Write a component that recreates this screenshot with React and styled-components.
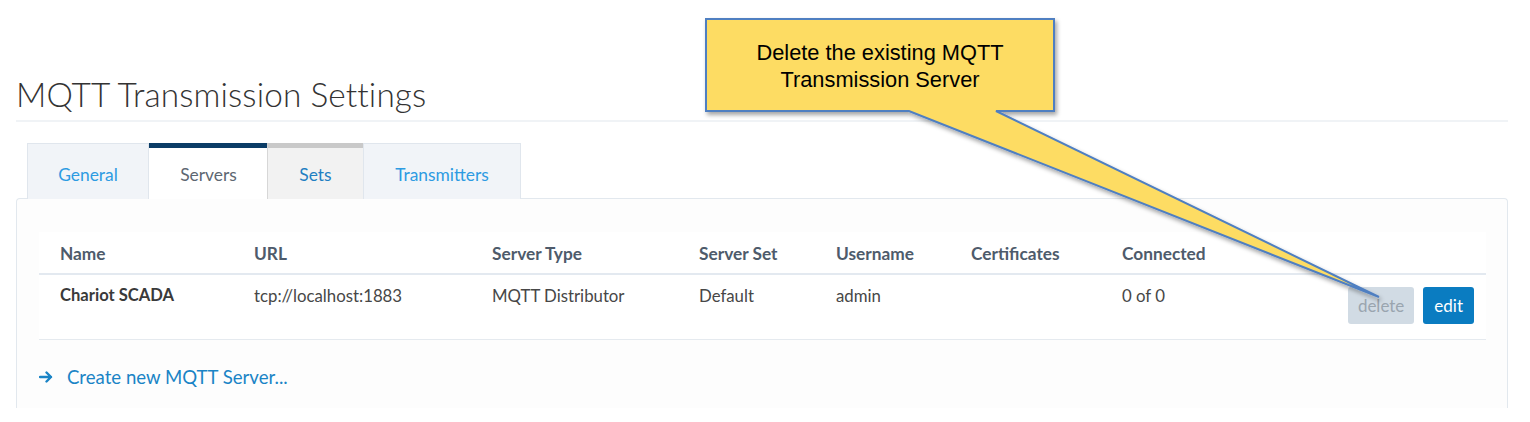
import React from "react";
import styled, { createGlobalStyle } from "styled-components";

const Global = createGlobalStyle`
  html, body { margin: 0; padding: 0; background: #ffffff; }
  body { font-family: Lato, "Noto Sans", sans-serif; color: #444; }
`;

const Page = styled.div`
  position: relative;
  width: 1530px;
  height: 422px;
  padding: 0 22px 0 16px;
  box-sizing: border-box;
  overflow: hidden;
`;

const Header = styled.div`
  padding-top: 72px;
  border-bottom: 2px solid #f0f3f6;
  height: 48px;
  box-sizing: content-box;
`;

const Title = styled.h1`
  margin: 0;
  font-family: Lato, sans-serif;
  font-weight: 300;
  font-size: 33.4px;
  line-height: 44px;
  color: #333;
  letter-spacing: 0.1px;
`;

const Tabs = styled.div`
  display: flex;
  margin-top: 21px;
  padding-left: 11px;
  position: relative;
  z-index: 1;
  margin-bottom: -1px;
`;

const Tab = styled.div`
  box-sizing: border-box;
  width: ${(p) => p.$w}px;
  height: 56px;
  display: flex;
  align-items: center;
  justify-content: center;
  padding-top: 6px;
  font-size: 17.4px;
  border: 1px solid #e0e6ed;
  border-bottom: none;
  margin-right: -1px;
  background: ${(p) =>
    p.$variant === "active" ? "#ffffff" : p.$variant === "muted" ? "#f2f2f2" : "#f1f4f8"};
  color: ${(p) =>
    p.$variant === "active" ? "#5d6772" : p.$variant === "muted" ? "#1f7fc2" : "#2d9be2"};
  border-top: ${(p) =>
    p.$variant === "active"
      ? "5px solid #0b3c66"
      : p.$variant === "muted"
      ? "5px solid #c9c9c9"
      : "1px solid #e0e6ed"};
  ${(p) => (p.$variant === "active" || p.$variant === "muted") && "padding-top: 2px;"}
  ${(p) => p.$variant === "active" && "border-left: none; border-right: none; width: " + (p.$w - 1) + "px; margin-left: 1px;"}
  ${(p) => p.$variant === "muted" && "border-color: #d7d7d7; border-top-color: #c9c9c9;"}
`;

const Panel = styled.div`
  background: #fdfdfd;
  border: 1px solid #e2e8ee;
  border-bottom: none;
  border-radius: 4px 4px 0 0;
  height: 210px;
  padding: 33px 21px 0 22px;
  box-sizing: border-box;
`;

const Table = styled.div`
  background: #ffffff;
`;

const Row = styled.div`
  display: grid;
  grid-template-columns: 194px 238px 207px 137px 135px 151px 1fr auto;
  align-items: ${(p) => (p.$head ? "center" : "start")};
  height: ${(p) => (p.$head ? "43px" : "65px")};
  box-sizing: border-box;
  padding-top: ${(p) => (p.$head ? "2px" : "0")};
  border-bottom: ${(p) => (p.$head ? "2px solid #e3e9f0" : "1px solid #e5eaef")};
`;

const HeadCell = styled.div`
  padding-left: 21px;
  font-size: 17.3px;
  font-weight: 700;
  color: #4e5b6b;
`;

const Cell = styled.div`
  padding-left: 21px;
  padding-top: 10px;
  font-size: ${(p) => (p.$bold ? "16.6px" : "16.8px")};
  font-weight: ${(p) => (p.$bold ? 700 : 400)};
  color: ${(p) => (p.$bold ? "#3a3a3a" : "#474747")};
`;

const Actions = styled.div`
  display: flex;
  gap: 9px;
  padding-top: 12px;
  padding-right: 12px;
`;

const Button = styled.button`
  font-family: Lato, sans-serif;
  font-size: 17px;
  height: 37px;
  padding: 0 ${(p) => (p.$primary ? "11px" : "10px")};
  border: none;
  border-radius: 3px;
  background: ${(p) => (p.$primary ? "#0a7cc1" : "#d1dbe4")};
  color: ${(p) => (p.$primary ? "#ffffff" : "#9aa5af")};
`;

const CreateLink = styled.a`
  display: flex;
  align-items: center;
  gap: 14px;
  margin-top: 26px;
  font-size: 18.6px;
  color: #1a84c6;
  text-decoration: none;
`;

const Callout = styled.svg`
  position: absolute;
  left: 0;
  top: 0;
  pointer-events: none;
`;

const CalloutText = styled.div`
  position: absolute;
  left: 706px;
  top: 19px;
  width: 348px;
  height: 92px;
  display: flex;
  flex-direction: column;
  align-items: center;
  justify-content: center;
  padding-top: 2px;
  box-sizing: border-box;
  font-family: "Liberation Sans", Arial, sans-serif;
  font-size: 21.8px;
  line-height: 27px;
  color: #000;
  text-align: center;
`;

const cols = ["Name", "URL", "Server Type", "Server Set", "Username", "Certificates", "Connected", ""];

export default function App() {
  return (
    <>
      <Global />
      <Page>
        <Header>
          <Title>MQTT Transmission Settings</Title>
        </Header>
        <Tabs>
          <Tab $w={122}>General</Tab>
          <Tab $w={120} $variant="active">Servers</Tab>
          <Tab $w={97} $variant="muted">Sets</Tab>
          <Tab $w={158}>Transmitters</Tab>
        </Tabs>
        <Panel>
          <Table>
            <Row $head>
              {cols.map((c, i) => (
                <HeadCell key={i}>{c}</HeadCell>
              ))}
            </Row>
            <Row>
              <Cell $bold>Chariot SCADA</Cell>
              <Cell>tcp://localhost:1883</Cell>
              <Cell>MQTT Distributor</Cell>
              <Cell>Default</Cell>
              <Cell>admin</Cell>
              <Cell></Cell>
              <Cell>0 of 0</Cell>
              <Actions>
                <Button>delete</Button>
                <Button $primary>edit</Button>
              </Actions>
            </Row>
          </Table>
          <CreateLink href="#">
            <svg width="14" height="12" viewBox="0 0 14 12">
              <path d="M1 6 H12 M7.5 1.5 L12 6 L7.5 10.5" stroke="#1a84c6" strokeWidth="2.4" fill="none" strokeLinecap="round" strokeLinejoin="round" />
            </svg>
            Create new MQTT Server...
          </CreateLink>
        </Panel>
        <Callout width="1530" height="422" viewBox="0 0 1530 422">
          <defs>
            <filter id="sh" x="-10%" y="-10%" width="130%" height="140%">
              <feDropShadow dx="2" dy="3" stdDeviation="2" floodColor="#000" floodOpacity="0.35" />
            </filter>
          </defs>
          <path
            d="M706 19 H1054 V111 H996 L1379 297 L909 111 H706 Z"
            fill="#fddc64"
            stroke="#4f7fc1"
            strokeWidth="2"
            strokeLinejoin="miter"
            filter="url(#sh)"
          />
        </Callout>
        <CalloutText>
          <div>Delete the existing MQTT</div>
          <div>Transmission Server</div>
        </CalloutText>
      </Page>
    </>
  );
}
